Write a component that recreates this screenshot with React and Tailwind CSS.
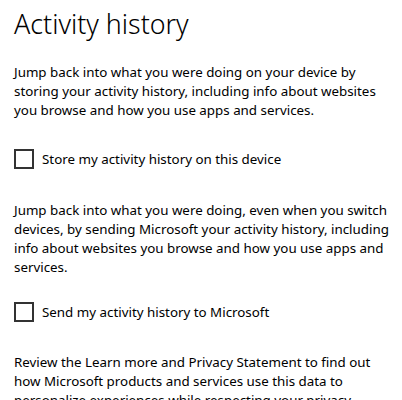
import React from 'react'

const font = { fontFamily: '"Noto Sans", "Open Sans", sans-serif' }

const Checkbox = ({ label }) => (
  <label className="flex items-center gap-[8px] cursor-pointer">
    <span className="w-[20px] h-[20px] border-2 border-[#333333] bg-white shrink-0" />
    <span className="text-[13.35px] leading-[19px] text-black">{label}</span>
  </label>
)

const App = () => {
  return (
    <div className="bg-white w-[402px] h-[400px] overflow-hidden pl-[14px] pr-[4px]" style={font}>
      <h1 className="text-[26.8px] font-light leading-[40px] pt-[4px] text-black">
        Activity history
      </h1>
      <p className="text-[13.35px] leading-[19px] text-black mt-[19px]">
        Jump back into what you were doing on your device by storing your activity history, including info about websites you browse and how you use apps and services.
      </p>
      <div className="mt-[29px]">
        <Checkbox label="Store my activity history on this device" />
      </div>
      <p className="text-[13.35px] leading-[19px] text-black mt-[32px]">
        Jump back into what you were doing, even when you switch devices, by sending Microsoft your activity history, including info about websites you browse and how you use apps and services.
      </p>
      <div className="mt-[25px]">
        <Checkbox label="Send my activity history to Microsoft" />
      </div>
      <p className="text-[13.35px] leading-[19px] text-black mt-[31px]">
        Review the Learn more and Privacy Statement to find out how Microsoft products and services use this data to personalize experiences while respecting your privacy.
      </p>
    </div>
  )
}

export default App
